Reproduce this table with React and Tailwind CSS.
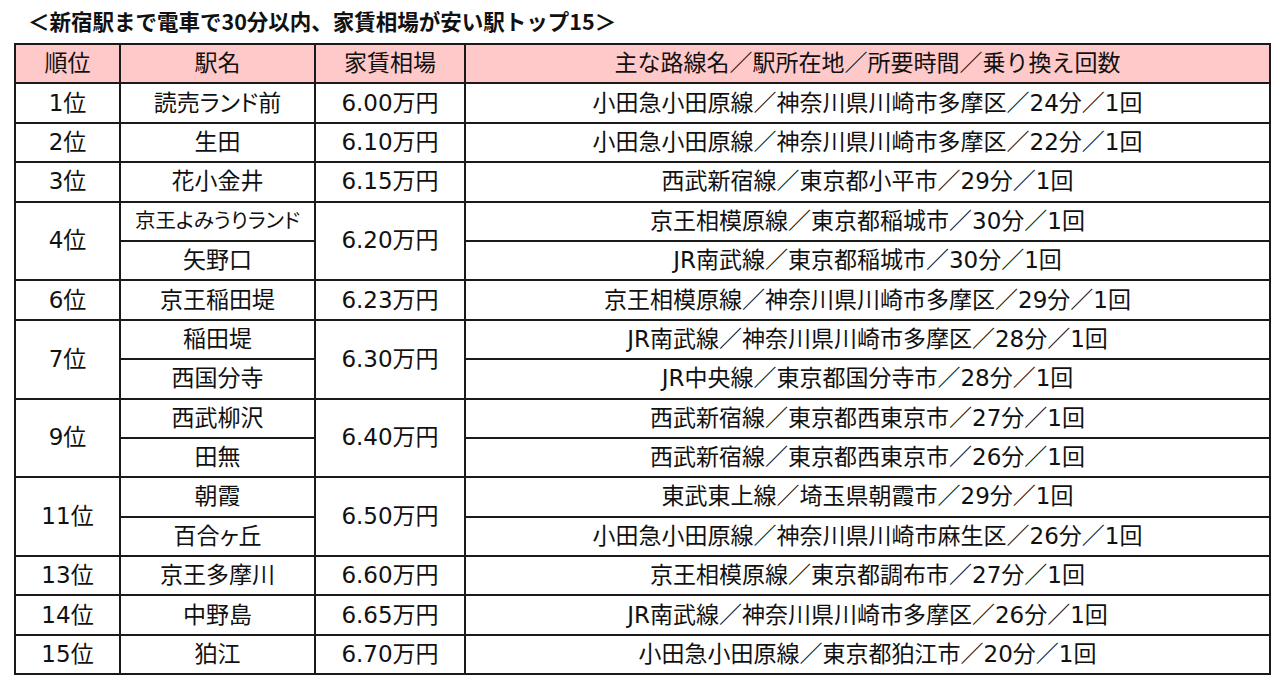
import React from "react";

const rows = [
  { rank: "1位", names: ["読売ランド前"], rent: "6.00万円", lines: ["小田急小田原線／神奈川県川崎市多摩区／24分／1回"] },
  { rank: "2位", names: ["生田"], rent: "6.10万円", lines: ["小田急小田原線／神奈川県川崎市多摩区／22分／1回"] },
  { rank: "3位", names: ["花小金井"], rent: "6.15万円", lines: ["西武新宿線／東京都小平市／29分／1回"] },
  { rank: "4位", names: ["京王よみうりランド", "矢野口"], rent: "6.20万円", lines: ["京王相模原線／東京都稲城市／30分／1回", "JR南武線／東京都稲城市／30分／1回"] },
  { rank: "6位", names: ["京王稲田堤"], rent: "6.23万円", lines: ["京王相模原線／神奈川県川崎市多摩区／29分／1回"] },
  { rank: "7位", names: ["稲田堤", "西国分寺"], rent: "6.30万円", lines: ["JR南武線／神奈川県川崎市多摩区／28分／1回", "JR中央線／東京都国分寺市／28分／1回"] },
  { rank: "9位", names: ["西武柳沢", "田無"], rent: "6.40万円", lines: ["西武新宿線／東京都西東京市／27分／1回", "西武新宿線／東京都西東京市／26分／1回"] },
  { rank: "11位", names: ["朝霞", "百合ヶ丘"], rent: "6.50万円", lines: ["東武東上線／埼玉県朝霞市／29分／1回", "小田急小田原線／神奈川県川崎市麻生区／26分／1回"] },
  { rank: "13位", names: ["京王多摩川"], rent: "6.60万円", lines: ["京王相模原線／東京都調布市／27分／1回"] },
  { rank: "14位", names: ["中野島"], rent: "6.65万円", lines: ["JR南武線／神奈川県川崎市多摩区／26分／1回"] },
  { rank: "15位", names: ["狛江"], rent: "6.70万円", lines: ["小田急小田原線／東京都狛江市／20分／1回"] },
];

const cell = "border-2 border-[#1a1a1a] text-center align-middle p-0 leading-none";

export default function App() {
  return (
    <div className="w-[1280px] h-[682px] bg-white text-[#111] overflow-hidden [font-family:'DejaVu_Sans','Noto_Sans_CJK_JP',sans-serif]">
      <div className="h-[43px] flex items-center pl-[28px] text-[21.5px] font-bold [font-family:'Noto_Sans_CJK_JP',sans-serif]">
        ＜新宿駅まで電車で30分以内、家賃相場が安い駅トップ15＞
      </div>
      <table className="ml-[14px] w-[1255px] border-collapse table-fixed text-[23px]">
        <colgroup>
          <col className="w-[105px]" />
          <col className="w-[195px]" />
          <col className="w-[150px]" />
          <col className="w-[805px]" />
        </colgroup>
        <thead>
          <tr className="h-[39.4px] bg-[#ffc9c9]">
            <th className={cell + " font-normal"}>順位</th>
            <th className={cell + " font-normal"}>駅名</th>
            <th className={cell + " font-normal"}>家賃相場</th>
            <th className={cell + " font-normal"}>主な路線名／駅所在地／所要時間／乗り換え回数</th>
          </tr>
        </thead>
        <tbody>
          {rows.map((r) =>
            r.names.map((n, i) => (
              <tr key={r.rank + i} className="h-[39.4px]">
                {i === 0 && (
                  <td className={cell} rowSpan={r.names.length}>{r.rank}</td>
                )}
                <td className={cell + " [font-feature-settings:'palt'] whitespace-nowrap" + (n.length > 7 ? " text-[20.5px]" : "")}>{n}</td>
                {i === 0 && (
                  <td className={cell} rowSpan={r.names.length}>{r.rent}</td>
                )}
                <td className={cell}>{r.lines[i]}</td>
              </tr>
            ))
          )}
        </tbody>
      </table>
    </div>
  );
}
